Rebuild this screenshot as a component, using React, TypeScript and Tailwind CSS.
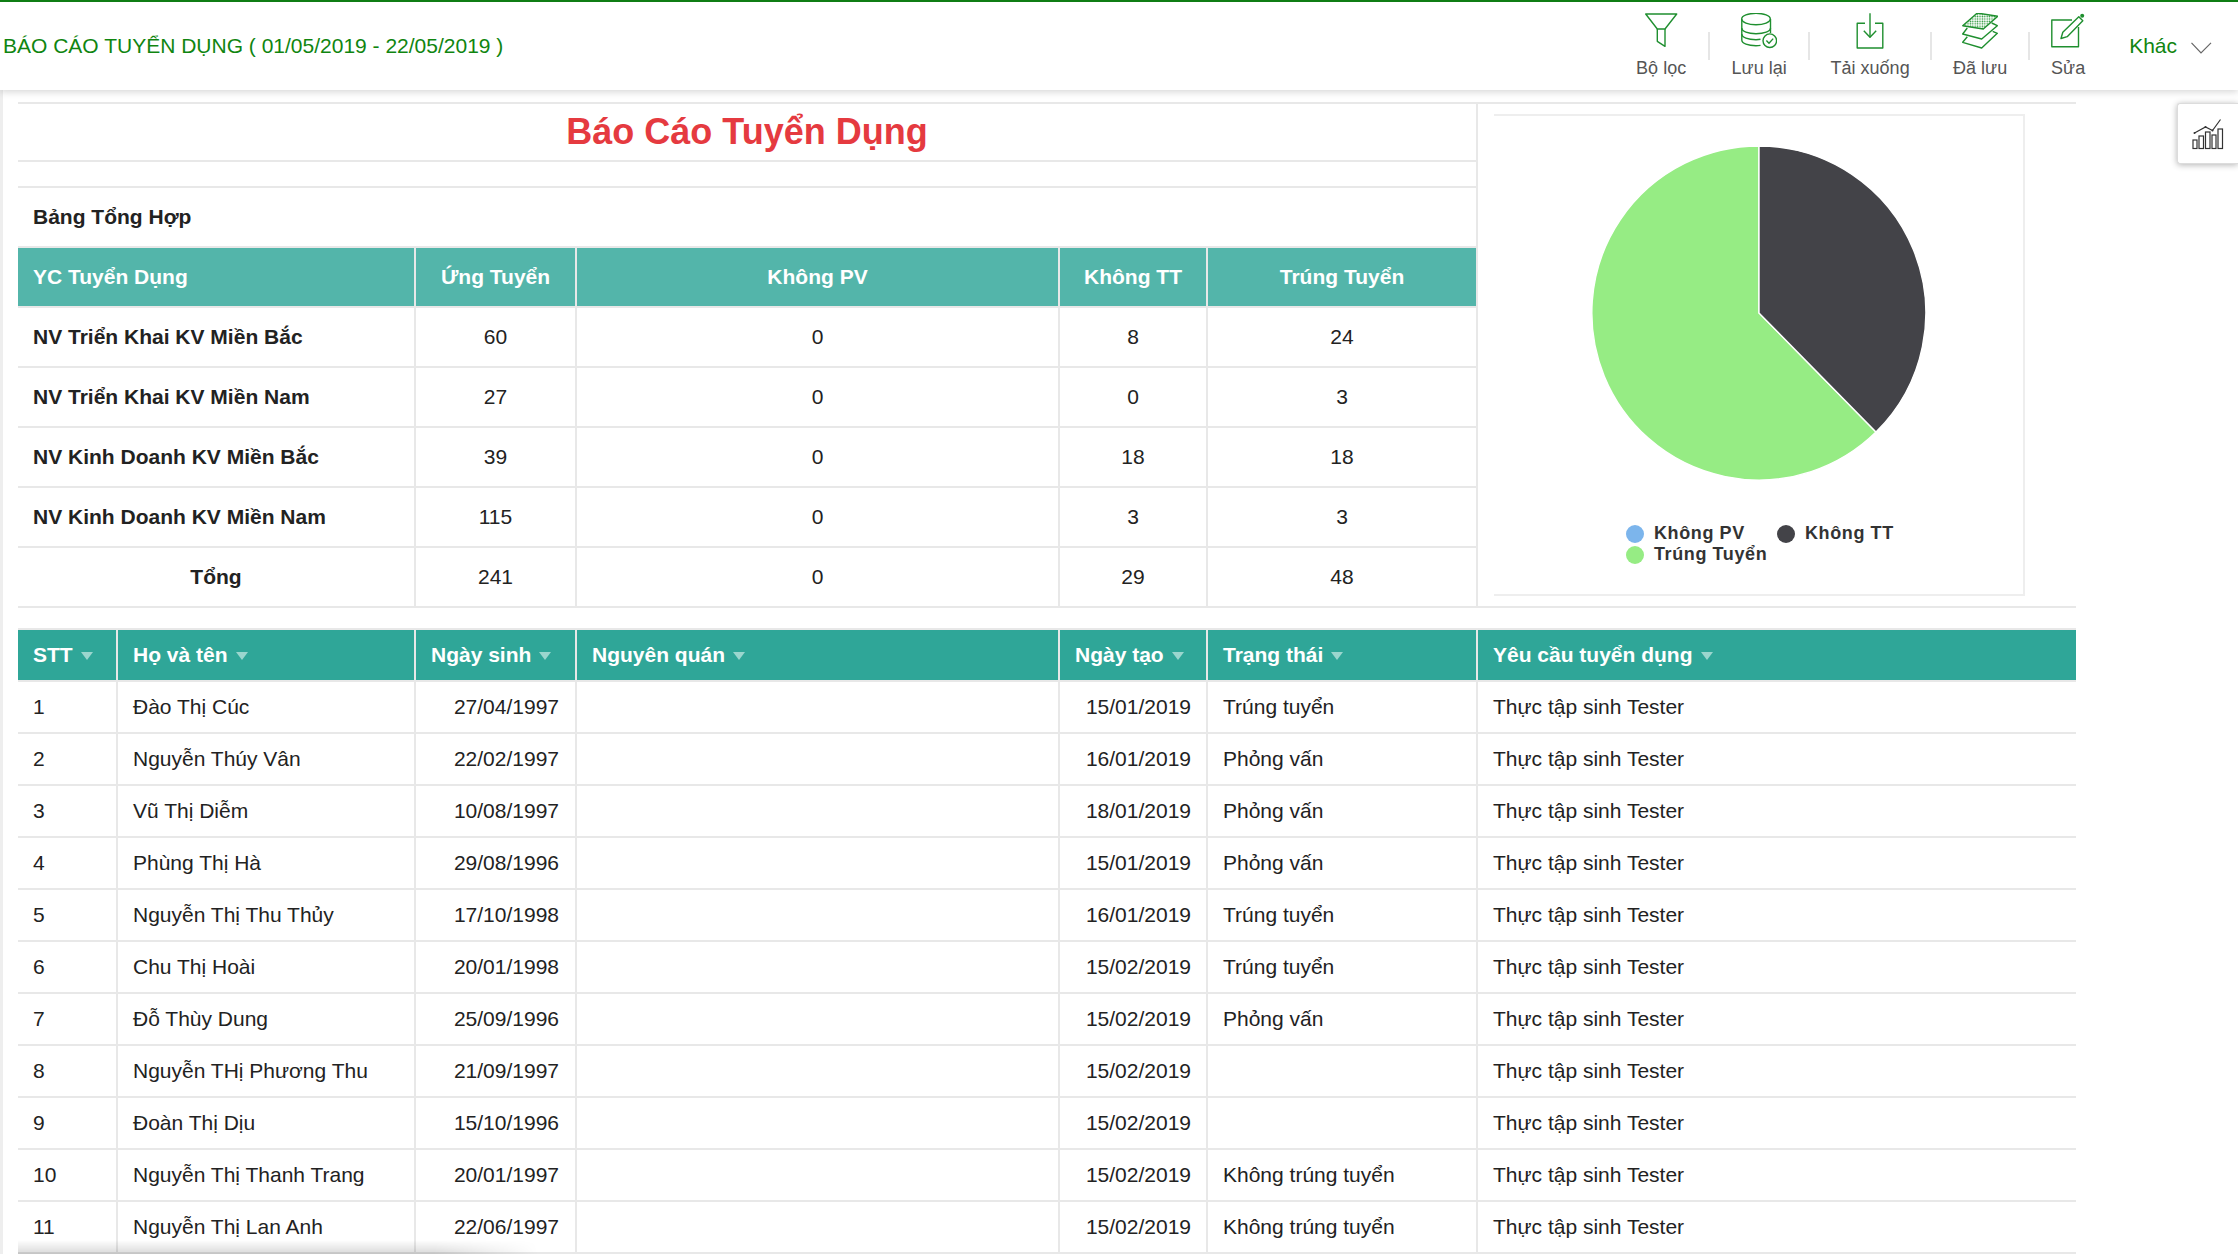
import type { ReactNode } from "react";

const summaryRows = [
  { name: "NV Triển Khai KV Miền Bắc", apply: 60, noInterview: 0, noPass: 8, pass: 24 },
  { name: "NV Triển Khai KV Miền Nam", apply: 27, noInterview: 0, noPass: 0, pass: 3 },
  { name: "NV Kinh Doanh KV Miền Bắc", apply: 39, noInterview: 0, noPass: 18, pass: 18 },
  { name: "NV Kinh Doanh KV Miền Nam", apply: 115, noInterview: 0, noPass: 3, pass: 3 },
];

const candidates = [
  ["1", "Đào Thị Cúc", "27/04/1997", "15/01/2019", "Trúng tuyển"],
  ["2", "Nguyễn Thúy Vân", "22/02/1997", "16/01/2019", "Phỏng vấn"],
  ["3", "Vũ Thị Diễm", "10/08/1997", "18/01/2019", "Phỏng vấn"],
  ["4", "Phùng Thị Hà", "29/08/1996", "15/01/2019", "Phỏng vấn"],
  ["5", "Nguyễn Thị Thu Thủy", "17/10/1998", "16/01/2019", "Trúng tuyển"],
  ["6", "Chu Thị Hoài", "20/01/1998", "15/02/2019", "Trúng tuyển"],
  ["7", "Đỗ Thùy Dung", "25/09/1996", "15/02/2019", "Phỏng vấn"],
  ["8", "Nguyễn THị Phương Thu", "21/09/1997", "15/02/2019", ""],
  ["9", "Đoàn Thị Dịu", "15/10/1996", "15/02/2019", ""],
  ["10", "Nguyễn Thị Thanh Trang", "20/01/1997", "15/02/2019", "Không trúng tuyển"],
  ["11", "Nguyễn Thị Lan Anh", "22/06/1997", "15/02/2019", "Không trúng tuyển"],
];

const IconBox = ({ children }: { children: ReactNode }) => (
  <svg
    width="36"
    height="36"
    viewBox="0 0 36 36"
    fill="none"
    stroke="#1f8f2f"
    strokeWidth="1.4"
    strokeLinejoin="round"
  >
    {children}
  </svg>
);

const FilterIcon = () => (
  <IconBox>
    <path d="M2.7 1H33.7L22 16H14.3Z" />
    <path d="M14.3 16V28.3L22 33.3V16" />
  </IconBox>
);

const DatabaseIcon = () => (
  <IconBox>
    <ellipse cx="15" cy="6" rx="14.3" ry="5.7" />
    <path d="M.8 6V27C.8 30.5 7 32.7 15 32.7C16.5 32.7 18 32.6 19.5 32.4" />
    <path d="M.8 15C.8 18.5 7 20.7 15 20.7S29.5 18.5 29.5 15" />
    <path d="M.8 21C.8 24.5 7 26.7 15 26.7C16.5 26.7 18 26.6 19.5 26.3" />
    <path d="M29.5 6V20" />
    <circle cx="28.8" cy="27.7" r="6.8" fill="#fff" />
    <path d="M25.4 27.6L28 30.2L32.2 25.6" />
  </IconBox>
);

const DownloadIcon = () => (
  <IconBox>
    <path d="M13 10.3H5.2V35H30.8V10.3H23" />
    <path d="M18 .3V24.3" />
    <path d="M11.8 17.7L18 24.3L24.2 17.7" />
  </IconBox>
);

const LayersIcon = () => (
  <IconBox>
    <defs>
      <pattern id="dots" width="2.4" height="2.4" patternUnits="userSpaceOnUse">
        <circle cx="1.2" cy="1.2" r=".75" fill="#1f8f2f" stroke="none" />
      </pattern>
    </defs>
    <path d="M.7 12.7L15.3 0L35.7 3.3L21.3 16Z" fill="url(#dots)" />
    <path d="M5.3 15L.7 21L19.7 26L35.3 12.7L29.7 10" />
    <path d="M5.3 23.7L.7 29.3L19.7 35L35.3 20.3L30.7 18.3" />
  </IconBox>
);

const EditIcon = () => (
  <IconBox>
    <path d="M22 7H1.8V33.7H28.5V14" />
    <path d="M12.8 19.3L28.8 3.7L32.8 7.7L17.2 23.7L11 25.5Z" />
    <circle cx="32.2" cy="2.7" r="2" fill="#1f8f2f" stroke="none" />
  </IconBox>
);

const toolbarItems = [
  { label: "Bộ lọc", width: "w-[94px]", icon: <FilterIcon /> },
  { label: "Lưu lại", width: "w-[98px]", icon: <DatabaseIcon /> },
  { label: "Tải xuống", width: "w-[120px]", icon: <DownloadIcon /> },
  { label: "Đã lưu", width: "w-[96px]", icon: <LayersIcon /> },
  { label: "Sửa", width: "w-[76px]", icon: <EditIcon /> },
];

const Caret = () => (
  <span className="ml-[8px] inline-block align-[2px] w-0 h-0 border-x-[6px] border-x-transparent border-t-[8px] border-t-[#9bd6ce]" />
);

const SortHead = ({ label, last }: { label: string; last?: boolean }) => (
  <th
    className={`h-[52px] px-[15px] text-left font-bold text-white bg-[#2fa698] border-b-2 border-[#e8e8e8] whitespace-nowrap ${
      last ? "" : "border-r-2"
    }`}
  >
    {label}
    <Caret />
  </th>
);

const Toolbar = () => (
  <div className="flex items-start">
    {toolbarItems.map((item, i) => (
      <div key={item.label} className="flex items-start">
        {i > 0 && <div className="w-[2px] h-[28px] mt-[30px] bg-[#e6e6e6]" />}
        <div className={`${item.width} flex flex-col items-center pt-[11px]`}>
          {item.icon}
          <span className="mt-[9px] text-[18px] leading-[20px] text-[#555]">{item.label}</span>
        </div>
      </div>
    ))}
    <div className="ml-[23px] mr-[26px] mt-[30px] flex items-center">
      <span className="text-[21px] leading-[28px] text-[#108510]">Khác</span>
      <svg width="21" height="12" viewBox="0 0 21 12" fill="none" stroke="#666" strokeWidth="1.2" className="ml-[14px] mt-[3px]">
        <path d="M.5 .8L10 11L20 .8" />
      </svg>
    </div>
  </div>
);

const PieChart = () => (
  <svg width="336" height="336" viewBox="-168 -168 336 336">
    <path d="M0 0L0 -167A167 167 0 1 0 117 119Z" fill="#96ec84" stroke="#fff" strokeWidth="1.4" />
    <path d="M0 0L0 -167A167 167 0 0 1 117 119Z" fill="#434348" stroke="#fff" strokeWidth="1.4" />
  </svg>
);

const LegendItem = ({ color, label }: { color: string; label: string }) => (
  <div className="flex items-center h-[21px]">
    <span className={`w-[18px] h-[18px] rounded-full ${color}`} />
    <span className="ml-[10px] text-[18px] font-bold text-[#333] tracking-[0.6px] whitespace-nowrap">{label}</span>
  </div>
);

export default function App() {
  return (
    <div className="relative h-[1254px] overflow-hidden bg-white font-['Liberation_Sans',Arial,sans-serif] text-[21px] text-[#222]">
      {/* Top bar */}
      <header className="relative z-10 h-[90px] border-t-2 border-[#0f7d14] bg-white shadow-[0_2px_7px_rgba(0,0,0,0.16)] flex justify-between">
        <h1 className="pl-[3px] self-center font-normal text-[21px] text-[#108510]">
          BÁO CÁO TUYỂN DỤNG ( 01/05/2019 - 22/05/2019 )
        </h1>
        <Toolbar />
      </header>

      <div className="border-l-[3px] border-[#eeeeee] pl-[15px] pt-[12px] h-[1164px]">
        <div className="w-[2058px]">
          {/* Report summary + chart */}
          <section className="flex border-y-2 border-[#e8e8e8]">
            <div className="w-[1460px] border-r-2 border-[#e8e8e8]">
              <div className="h-[58px] border-b-2 border-[#e8e8e8] flex items-center justify-center">
                <h2 className="text-[36px] font-bold text-[#e53a40]">Báo Cáo Tuyển Dụng</h2>
              </div>
              <div className="mt-[24px] h-[62px] border-y-2 border-[#e8e8e8] flex items-center px-[15px] font-bold">
                Bảng Tổng Hợp
              </div>
              <table className="w-[1458px] table-fixed border-separate border-spacing-0">
                <colgroup>
                  <col className="w-[398px]" />
                  <col className="w-[161px]" />
                  <col className="w-[483px]" />
                  <col className="w-[148px]" />
                  <col className="w-[268px]" />
                </colgroup>
                <thead>
                  <tr>
                    {["YC Tuyển Dụng", "Ứng Tuyển", "Không PV", "Không TT", "Trúng Tuyển"].map((h, i) => (
                      <th
                        key={h}
                        className={`h-[60px] px-[15px] font-bold text-white bg-[#53b5aa] border-b-2 border-[#e8e8e8] ${
                          i === 0 ? "text-left" : "text-center"
                        } ${i < 4 ? "border-r-2" : ""}`}
                      >
                        {h}
                      </th>
                    ))}
                  </tr>
                </thead>
                <tbody>
                  {summaryRows.map((r) => (
                    <tr key={r.name}>
                      <td className="h-[60px] px-[15px] font-bold border-b-2 border-r-2 border-[#e8e8e8]">{r.name}</td>
                      <td className="text-center border-b-2 border-r-2 border-[#e8e8e8]">{r.apply}</td>
                      <td className="text-center border-b-2 border-r-2 border-[#e8e8e8]">{r.noInterview}</td>
                      <td className="text-center border-b-2 border-r-2 border-[#e8e8e8]">{r.noPass}</td>
                      <td className="text-center border-b-2 border-[#e8e8e8]">{r.pass}</td>
                    </tr>
                  ))}
                  <tr>
                    <td className="h-[58px] text-center font-bold border-r-2 border-[#e8e8e8]">Tổng</td>
                    <td className="text-center border-r-2 border-[#e8e8e8]">241</td>
                    <td className="text-center border-r-2 border-[#e8e8e8]">0</td>
                    <td className="text-center border-r-2 border-[#e8e8e8]">29</td>
                    <td className="text-center">48</td>
                  </tr>
                </tbody>
              </table>
            </div>
            <div className="pl-[16px] py-[10px]">
              <div className="w-[531px] h-[482px] border-y-2 border-r-2 border-[#eeeeee] flex flex-col items-center pt-[29px]">
                <PieChart />
                <div className="mt-[42px] self-start ml-[132px]">
                  <div className="flex">
                    <div className="w-[151px]">
                      <LegendItem color="bg-[#7cb5ec]" label="Không PV" />
                    </div>
                    <LegendItem color="bg-[#434348]" label="Không TT" />
                  </div>
                  <LegendItem color="bg-[#96ec84]" label="Trúng Tuyển" />
                </div>
              </div>
            </div>
          </section>

          {/* Candidate list */}
          <table className="mt-[20px] w-[2058px] table-fixed border-separate border-spacing-0 border-t-2 border-[#e8e8e8]">
            <colgroup>
              <col className="w-[100px]" />
              <col className="w-[298px]" />
              <col className="w-[161px]" />
              <col className="w-[483px]" />
              <col className="w-[148px]" />
              <col className="w-[270px]" />
              <col className="w-[598px]" />
            </colgroup>
            <thead>
              <tr>
                <SortHead label="STT" />
                <SortHead label="Họ và tên" />
                <SortHead label="Ngày sinh" />
                <SortHead label="Nguyên quán" />
                <SortHead label="Ngày tạo" />
                <SortHead label="Trạng thái" />
                <SortHead label="Yêu cầu tuyển dụng" last />
              </tr>
            </thead>
            <tbody>
              {candidates.map(([stt, name, dob, created, status]) => (
                <tr key={stt}>
                  <td className="h-[52px] px-[15px] border-b-2 border-r-2 border-[#e8e8e8]">{stt}</td>
                  <td className="px-[15px] border-b-2 border-r-2 border-[#e8e8e8]">{name}</td>
                  <td className="pl-[15px] pr-[16px] text-right border-b-2 border-r-2 border-[#e8e8e8]">{dob}</td>
                  <td className="border-b-2 border-r-2 border-[#e8e8e8]" />
                  <td className="px-[15px] text-right border-b-2 border-r-2 border-[#e8e8e8]">{created}</td>
                  <td className="px-[15px] border-b-2 border-r-2 border-[#e8e8e8]">{status}</td>
                  <td className="px-[15px] border-b-2 border-[#e8e8e8]">Thực tập sinh Tester</td>
                </tr>
              ))}
            </tbody>
          </table>
        </div>
      </div>

      {/* Chart shortcut tab */}
      <div className="absolute right-0 top-[103px] w-[61px] h-[61px] bg-white rounded-l-[3px] border border-r-0 border-[#dcdcdc] shadow-[0_1px_6px_rgba(0,0,0,0.3)] flex items-center justify-center">
        <svg width="32" height="32" viewBox="0 0 32 32" fill="none" stroke="#333" strokeWidth="1.2">
          <rect x="1" y="22" width="4" height="8.5" />
          <rect x="7" y="18" width="4.5" height="12.5" />
          <rect x="13.5" y="14" width="4.5" height="16.5" />
          <rect x="20" y="17" width="4" height="13.5" />
          <rect x="26" y="11" width="4.5" height="19.5" />
          <path d="M2.5 15L13.5 9L20.5 12.5L28.5 1.5" />
          <circle cx="2.5" cy="15" r="1" fill="#333" stroke="none" />
          <circle cx="13.5" cy="9" r="1" fill="#333" stroke="none" />
          <circle cx="20.5" cy="12.5" r="1" fill="#333" stroke="none" />
        </svg>
      </div>

      {/* Fading edge at the bottom of the page */}
      <div className="absolute left-[18px] bottom-0 w-[520px] h-[14px] bg-gradient-to-t from-black/15 to-transparent [mask-image:linear-gradient(to_right,black_80%,transparent)]" />
    </div>
  );
}
